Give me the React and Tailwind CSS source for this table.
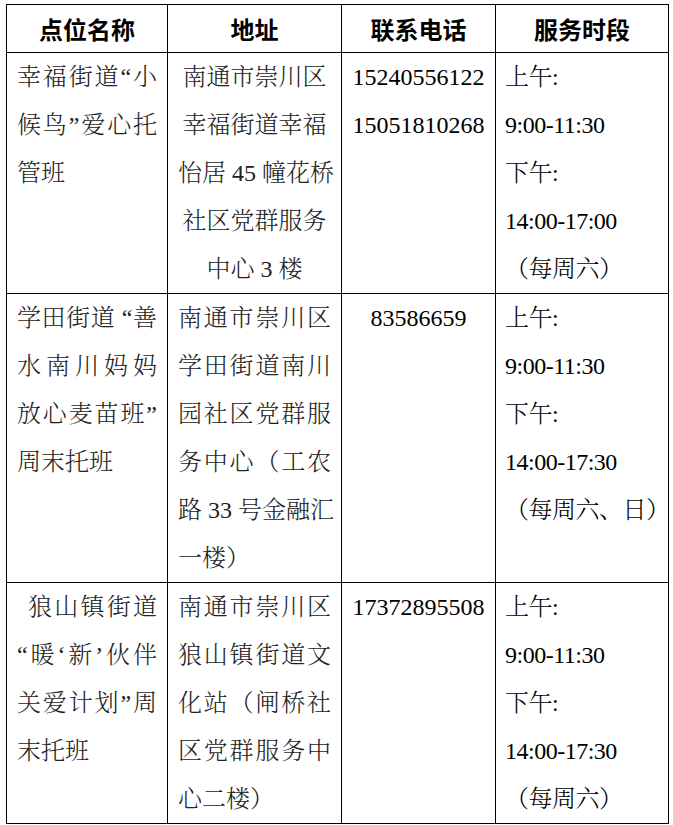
import React from 'react';

// each cell = list of lines; "j" = justified line, "l" = left, "c" = centered
const rows = [
  {
    h: 'h-[240px]',
    name: [['j', '幸福街道“小'], ['j', '候鸟”爱心托'], ['l', '管班']],
    addr: [['c', '南通市崇川区'], ['c', '幸福街道幸福'], ['c', '怡居 45 幢花桥'], ['c', '社区党群服务'], ['c', '中心 3 楼']],
    phone: ['15240556122', '15051810268'],
    time: ['上午:', '9:00-11:30', '下午:', '14:00-17:00', '（每周六）'],
  },
  {
    h: 'h-[287px]',
    name: [['j', '学田街道 “善'], ['j', '水南川妈妈'], ['j', '放心麦苗班”'], ['l', '周末托班']],
    addr: [['j', '南通市崇川区'], ['j', '学田街道南川'], ['j', '园社区党群服'], ['j', '务中心（工农'], ['j', '路 33 号金融汇'], ['l', '一楼）']],
    phone: ['83586659'],
    time: ['上午:', '9:00-11:30', '下午:', '14:00-17:30', '（每周六、日）'],
  },
  {
    h: 'h-[241px]',
    name: [['ji', '狼山镇街道'], ['j', '“暖‘新’伙伴'], ['j', '关爱计划”周'], ['l', '末托班']],
    addr: [['j', '南通市崇川区'], ['j', '狼山镇街道文'], ['j', '化站（闸桥社'], ['j', '区党群服务中'], ['l', '心二楼）']],
    phone: ['17372895508'],
    time: ['上午:', '9:00-11:30', '下午:', '14:00-17:30', '（每周六）'],
  },
];

function Line({ mode, text }) {
  if (mode === 'j') return <div className="whitespace-nowrap text-justify [text-align-last:justify]">{text}</div>;
  if (mode === 'ji') return <div className="whitespace-nowrap pl-[11px] text-justify [text-align-last:justify]">{text}</div>;
  if (mode === 'c') return <div className="whitespace-nowrap text-center">{text}</div>;
  return <div className="whitespace-nowrap text-left">{text}</div>;
}

export default function App() {
  return (
    <div lang="zh-CN" className="bg-white min-h-screen pl-[6px] pt-[4px] text-black">
      <table className="table-fixed border-collapse w-[662px]">
        <colgroup>
          <col className="w-[161px]" />
          <col className="w-[174px]" />
          <col className="w-[154px]" />
          <col className="w-[173px]" />
        </colgroup>
        <thead>
          <tr className="h-[48px] font-['Noto_Sans_CJK_SC',sans-serif] text-[24px]">
            <th className="border border-black font-semibold">点位名称</th>
            <th className="border border-black font-semibold">地址</th>
            <th className="border border-black font-semibold">联系电话</th>
            <th className="border border-black font-semibold">服务时段</th>
          </tr>
        </thead>
        <tbody className="font-['Liberation_Serif','Noto_Serif_CJK_SC','Noto_Sans_CJK_SC',serif] font-light text-[24px] leading-[48px]">
          {rows.map((r, i) => (
            <tr key={i} className={r.h}>
              <td className="border border-black align-top px-[10px] text-[#222]">
                {r.name.map(([m, t], k) => <Line key={k} mode={m} text={t} />)}
              </td>
              <td className="border border-black align-top px-[10px] text-[#222]">
                {r.addr.map(([m, t], k) => <Line key={k} mode={m} text={t} />)}
              </td>
              <td className="border border-black align-top text-center">
                {r.phone.map((p) => <div key={p}>{p}</div>)}
              </td>
              <td className="border border-black align-top pl-[9px]">
                {r.time.map((t, k) => <div key={k} className="whitespace-nowrap tracking-[-0.5px]">{t}</div>)}
              </td>
            </tr>
          ))}
        </tbody>
      </table>
    </div>
  );
}
